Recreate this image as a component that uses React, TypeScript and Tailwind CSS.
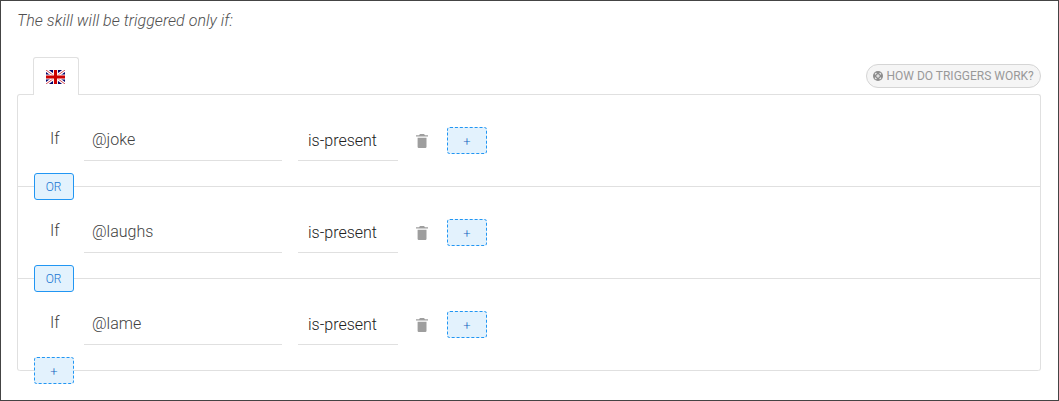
import React from "react";

const values = ["@joke", "@laughs", "@lame"];

function Flag() {
  return (
    <svg width="19" height="14" viewBox="0 0 19 14" className="block">
      <rect width="19" height="14" fill="#00006b" />
      <path d="M0 0L19 14M19 0L0 14" stroke="#fff" strokeWidth="3.4" />
      <path d="M0 0L19 14M19 0L0 14" stroke="#d8505a" strokeWidth="1" />
      <path d="M9.5 0V14M0 7H19" stroke="#fbeef0" strokeWidth="5" />
      <path d="M9.5 0V14" stroke="#cc0000" strokeWidth="3" />
      <path d="M0 7H19" stroke="#cc0000" strokeWidth="3" />
    </svg>
  );
}

function Trash() {
  return (
    <svg width="12" height="14" viewBox="0 0 12 14" fill="#9e9e9e" className="block">
      <path d="M4 0h4l1 1.2h3v1.3H0V1.2h3zM1.6 3.7h8.9v9.1a1.2 1.2 0 0 1-1.2 1.2H2.8a1.2 1.2 0 0 1-1.2-1.2z" />
    </svg>
  );
}

function HelpMark() {
  return (
    <svg width="10" height="10" viewBox="0 0 10 10" className="block">
      <circle cx="5" cy="5" r="5" fill="#8c8c8c" />
      <path
        d="M5 3.2V6.8M3.2 5H6.8M2 3.4L3.4 2M6.6 2L8 3.4M8 6.6L6.6 8M3.4 8L2 6.6"
        stroke="#f5f5f5"
        strokeWidth="1.1"
      />
    </svg>
  );
}

function Plus() {
  return (
    <button className="flex h-[27px] w-10 items-center justify-center rounded-[3px] border border-dashed border-[#2196f3] bg-[#e3f2fd] text-[13px] leading-none font-light text-[#1565c0]">
      <span className="pt-px">+</span>
    </button>
  );
}

export default function App() {
  return (
    <div className="h-[401px] w-[1059px] border border-[#444] bg-white px-4 font-['Roboto',sans-serif] text-[16px] font-light text-[#424242]">
      <p className="h-[56px] pt-2 leading-6 tracking-[0.04px] text-[#505050] italic">The skill will be triggered only if:</p>
      <div className="flex h-[37px] w-[1024px] items-start justify-between">
        <div className="relative z-10 ml-4 flex h-[38px] w-[46px] justify-center rounded-t-[3px] border border-b-0 border-[#e0e0e0] bg-white pt-3 pr-px">
          <Flag />
        </div>
        <button className="mt-[7px] flex h-6 w-[175px] items-center gap-1 rounded-full border border-[#d5d5d5] bg-[#f5f5f5] pl-[5.5px] text-[12px] font-normal whitespace-nowrap text-[#999]">
          <HelpMark />
          HOW DO TRIGGERS WORK?
        </button>
      </div>
      <div className="w-[1024px] rounded-[3px] border border-b-0 border-[#e0e0e0]">
        {values.map((value, i) => (
          <div
            key={value}
            className="relative flex h-[92px] items-start border-b border-[#e0e0e0] pl-8 last:rounded-b-[3px]"
          >
            <span className="w-[34px] pt-8 leading-6">If</span>
            <div className="h-[66px] w-[198px] border-b border-[#e0e0e0] pt-[33px] pl-2 leading-6">{value}</div>
            <div className="ml-4 h-[66px] w-[100px] border-b border-[#e0e0e0] pt-[34px] pl-2.5 leading-6 text-[#212121]">
              is-present
            </div>
            <div className="mt-[39px] ml-[18px] w-[31px]">
              <Trash />
            </div>
            <div className="mt-8">
              <Plus />
            </div>
            <div className="absolute -bottom-[14px] left-4 z-10">
              {i < values.length - 1 ? (
                <button className="flex h-[27px] w-10 items-center justify-center rounded-[3px] border border-[#2196f3] bg-[#e3f2fd] pr-px text-[12px] font-light text-[#1976d2]">
                  OR
                </button>
              ) : (
                <Plus />
              )}
            </div>
          </div>
        ))}
      </div>
    </div>
  );
}
